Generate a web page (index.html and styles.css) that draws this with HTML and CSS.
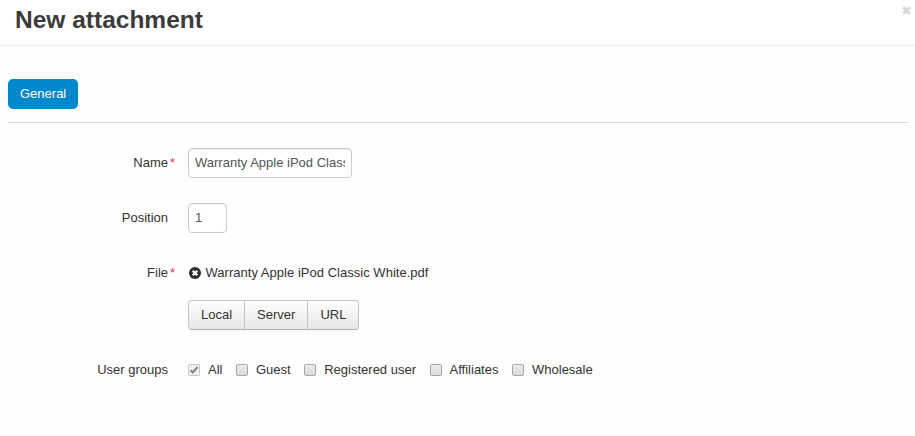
FILE: index.html
```html
<!DOCTYPE html>
<html lang="en">
<head>
<meta charset="utf-8">
<title>New attachment</title>
<link rel="stylesheet" href="styles.css">
</head>
<body>
<header class="dialog-header">
  <h3 class="title">New attachment</h3>
  <button class="close" type="button" aria-label="Close">
    <svg width="9" height="9" viewBox="0 0 9 9"><path d="M1.2 1.2 7.8 7.8M7.8 1.2 1.2 7.8" stroke="currentColor" stroke-width="3"/></svg>
  </button>
</header>
<main class="dialog-body">
  <nav class="tabs"><a class="tab">General</a></nav>
  <form class="form">
    <div class="row">
      <label class="label required">Name</label>
      <input class="input" type="text" value="Warranty Apple iPod Classic White">
    </div>
    <div class="row">
      <label class="label">Position</label>
      <input class="input input-short" type="text" value="1">
    </div>
    <div class="row">
      <label class="label required">File</label>
      <div class="controls">
        <div class="file">
          <svg class="remove" width="12" height="12" viewBox="0 0 12 12"><circle cx="6" cy="6" r="6" fill="#2b2b2b"/><path d="M3.7 3.7 8.3 8.3M8.3 3.7 3.7 8.3" stroke="#fff" stroke-width="2.3"/></svg>
          <span class="filename">Warranty Apple iPod Classic White.pdf</span>
        </div>
        <div class="btn-group">
          <button class="btn" type="button">Local</button>
          <button class="btn" type="button">Server</button>
          <button class="btn" type="button">URL</button>
        </div>
      </div>
    </div>
    <div class="row">
      <label class="label">User groups</label>
      <div class="groups">
        <label class="check"><span class="box box-disabled"><svg width="10" height="10" viewBox="0 0 10 10"><path d="M1.5 5.2 3.8 7.5 8.5 2" fill="none" stroke="#858585" stroke-width="2"/></svg></span>All</label>
        <label class="check"><span class="box"></span>Guest</label>
        <label class="check"><span class="box"></span>Registered user</label>
        <label class="check"><span class="box"></span>Affiliates</label>
        <label class="check"><span class="box"></span>Wholesale</label>
      </div>
    </div>
  </form>
</main>
</body>
</html>
```
FILE: styles.css
```css
* { box-sizing: border-box; }
body {
  margin: 0;
  min-height: 436px;
  background: #fefefe;
  color: #333;
  font: 13px/20px "Liberation Sans", Arial, sans-serif;
}
.dialog-header {
  display: flex;
  justify-content: space-between;
  align-items: flex-start;
  height: 46px;
  padding: 0 4px 0 15px;
  background: #fff;
  border-bottom: 1px solid #eee;
}
.title {
  margin: 0;
  font-size: 24.5px;
  line-height: 40px;
  font-weight: bold;
  color: #3b3b3b;
}
.close {
  display: flex;
  margin: 6px 0 0;
  padding: 0;
  border: 0;
  background: none;
  color: #d9d9d9;
}
.dialog-body { padding: 33px 7px 0 8px; }
.tabs {
  display: flex;
  height: 44px;
  border-bottom: 1px solid #d9d9d9;
}
.tab {
  height: 30px;
  padding: 0 12px;
  border-radius: 5px;
  background: #0088cc;
  color: #fff;
  line-height: 30px;
}
.form {
  display: flex;
  flex-direction: column;
  gap: 25px;
  padding-top: 25px;
}
.row { display: flex; gap: 20px; }
.label {
  position: relative;
  width: 160px;
  line-height: 30px;
  text-align: right;
}
.required::after {
  content: "*";
  position: absolute;
  left: 162px;
  top: 0;
  color: #f03040;
}
.input {
  width: 164px;
  height: 30px;
  padding: 3px 6px 5px;
  border: 1px solid #ccc;
  border-radius: 4px;
  background: #fff;
  box-shadow: inset 0 1px 1px rgba(0, 0, 0, .075);
  color: #555;
  font: inherit;
}
.input-short { width: 39px; }
.file {
  display: flex;
  align-items: center;
  gap: 4.5px;
  height: 30px;
  padding-left: 1px;
}
.filename { letter-spacing: .025px; }
.btn-group { display: flex; margin-top: 12px; }
.btn {
  height: 30px;
  margin: 0 0 0 -1px;
  padding: 0 12px;
  border: 1px solid #c5c5c5;
  border-bottom-color: #b3b3b3;
  background: linear-gradient(#fff, #e6e6e6);
  box-shadow: 0 1px 1px rgba(0, 0, 0, .04);
  color: #333;
  font: inherit;
}
.btn:first-child { margin-left: 0; border-radius: 4px 0 0 4px; }
.btn:last-child { border-radius: 0 4px 4px 0; }
.groups { display: flex; gap: 13.55px; }
.check { display: flex; align-items: center; gap: 8px; height: 30px; }
.box {
  width: 12px;
  height: 12px;
  border: 1px solid #a5a5a5;
  border-radius: 2px;
  background: linear-gradient(#ececec, #dcdcdc);
}
.box-disabled { border-color: #c6c6c6; background: #f0f0f0; }
.box-disabled svg { display: block; }
```
